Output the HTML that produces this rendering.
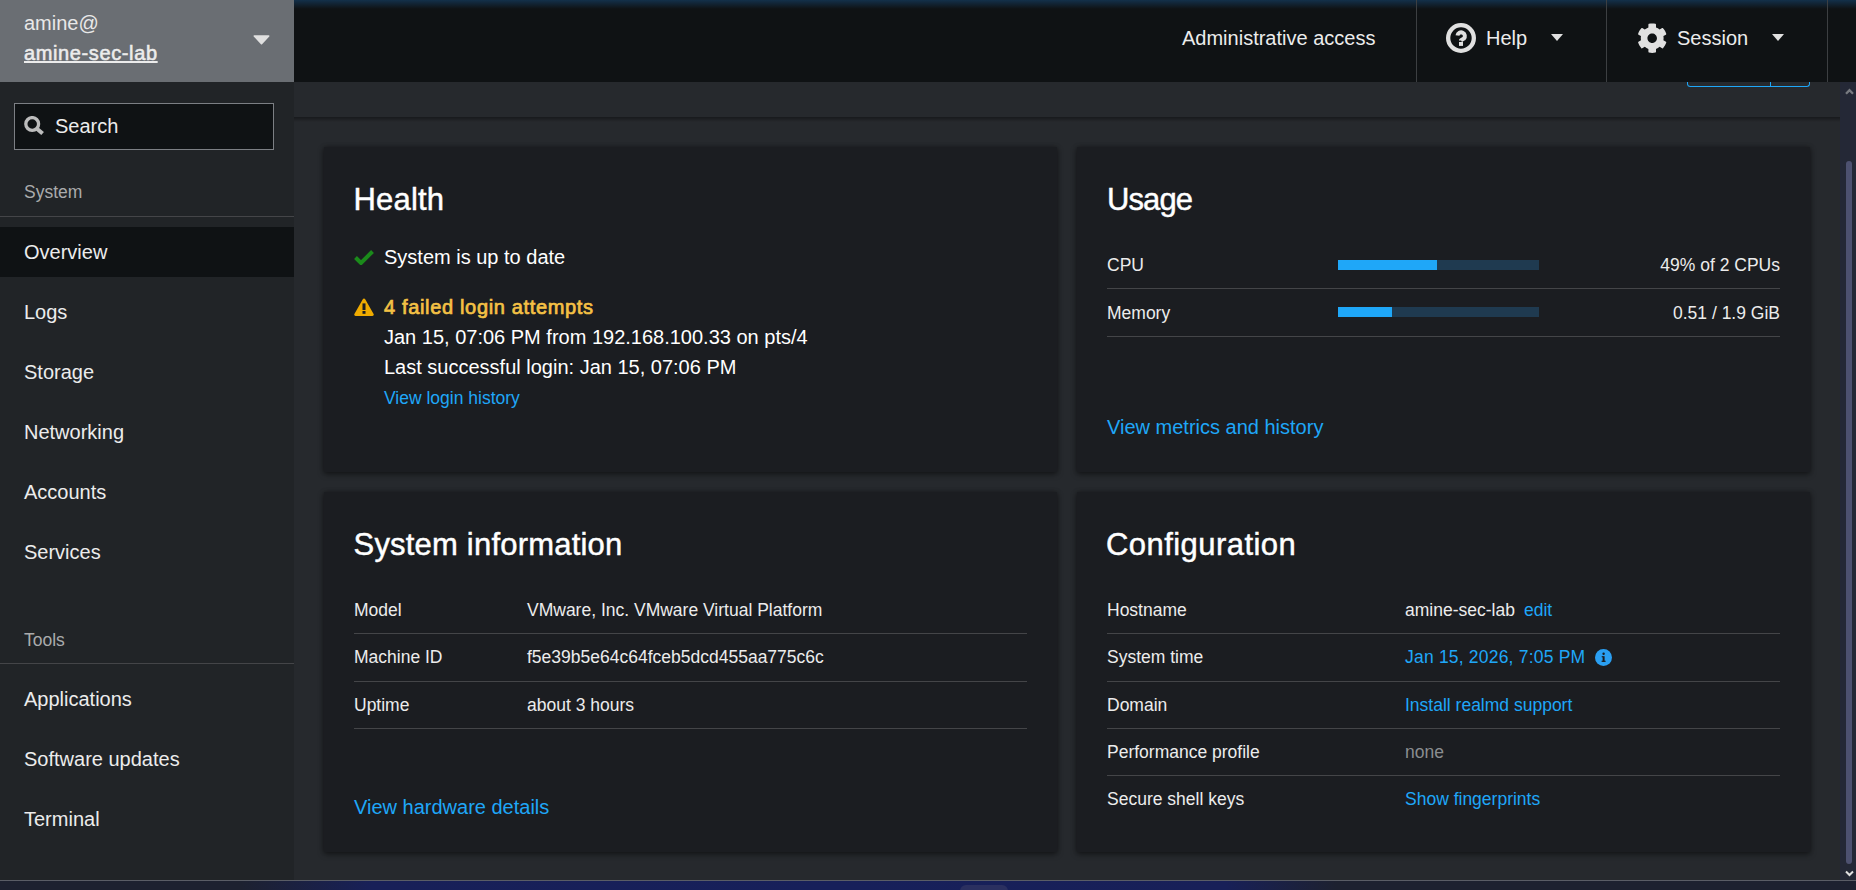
<!DOCTYPE html>
<html><head><meta charset="utf-8"><style>
html,body{margin:0;padding:0;width:1856px;height:890px;overflow:hidden;background:#26292d;font-family:"Liberation Sans", sans-serif;}
.b{position:absolute;}
.t{position:absolute;white-space:nowrap;}
</style></head><body>
<div class="b" style="left:294px;top:82px;width:1546px;height:798px;background:#26292d;"></div>
<div class="b" style="left:0px;top:82px;width:294px;height:798px;background:#212427;"></div>
<div class="b" style="left:0px;top:0px;width:294px;height:82px;background:#6a6e73;"></div>
<div class="b" style="left:294px;top:0px;width:1562px;height:82px;background:#0f1214;"></div>
<div class="b" style="left:294px;top:0px;width:1562px;height:9px;background:linear-gradient(#13304a, rgba(15,18,20,0));"></div>
<div class="b" style="left:294px;top:82px;width:1546px;height:35px;background:#26292d;z-index:1;"></div>
<div class="b" style="left:294px;top:117px;width:1546px;height:5px;background:linear-gradient(rgba(0,0,0,.38),rgba(0,0,0,0));z-index:1;"></div>
<div class="b" style="left:1687px;top:70px;width:123px;height:17px;border:1.5px solid #1fa7f8;border-top:none;border-radius:0 0 3.5px 3.5px;box-sizing:border-box;z-index:2"></div>
<div class="b" style="left:1770px;top:70px;width:1px;height:17px;background:#1fa7f8;z-index:2;"></div>
<div class="b" style="left:294px;top:0px;width:1546px;height:82px;background:#0f1214;z-index:3;"></div>
<div class="b" style="left:294px;top:0px;width:1546px;height:9px;background:linear-gradient(#13304a, rgba(15,18,20,0));z-index:3;"></div>
<div class="t" style="top:12px;font-size:20px;line-height:22px;color:#e8e8e8;left:24px;">amine@</div>
<div class="t" style="top:42px;font-size:20px;line-height:22px;color:#ececec;left:24px;letter-spacing:0.62px;-webkit-text-stroke:0.55px #ececec;text-decoration:underline;text-underline-offset:1px;text-decoration-thickness:2px;">amine-sec-lab</div>
<svg class="b" style="left:252.5px;top:34.5px" width="17" height="10" viewBox="0 0 17 10"><path d="M1.3 1H15.7L8.5 8.6Z" fill="#e0e0e0" stroke="#e0e0e0" stroke-width="1.6" stroke-linejoin="round"/></svg>
<div class="b" style="left:14px;top:103px;width:260px;height:47px;background:#0f1214;border:1px solid #7c7f84;box-sizing:border-box;"></div>
<svg class="b" style="left:24px;top:116px" width="20" height="20" viewBox="0 0 20 20"><circle cx="8.2" cy="8" r="6.4" fill="none" stroke="#bdbdbd" stroke-width="3.3"/><path d="M12.6 12.4L18.6 17.6" stroke="#bdbdbd" stroke-width="4"/></svg>
<div class="t" style="top:115px;font-size:20px;line-height:22px;color:#ececec;left:55px;">Search</div>
<div class="t" style="top:182px;font-size:17.5px;line-height:20px;color:#aaabac;left:24px;">System</div>
<div class="b" style="left:0px;top:216px;width:294px;height:1px;background:#444548;"></div>
<div class="b" style="left:0px;top:227px;width:294px;height:50px;background:#0f1214;"></div>
<div class="t" style="top:241px;font-size:20px;line-height:22px;color:#ececec;left:24px;">Overview</div>
<div class="t" style="top:301px;font-size:20px;line-height:22px;color:#ececec;left:24px;">Logs</div>
<div class="t" style="top:361px;font-size:20px;line-height:22px;color:#ececec;left:24px;">Storage</div>
<div class="t" style="top:421px;font-size:20px;line-height:22px;color:#ececec;left:24px;">Networking</div>
<div class="t" style="top:481px;font-size:20px;line-height:22px;color:#ececec;left:24px;">Accounts</div>
<div class="t" style="top:541px;font-size:20px;line-height:22px;color:#ececec;left:24px;">Services</div>
<div class="t" style="top:630px;font-size:17.5px;line-height:20px;color:#aaabac;left:24px;">Tools</div>
<div class="b" style="left:0px;top:663px;width:294px;height:1px;background:#444548;"></div>
<div class="t" style="top:688px;font-size:20px;line-height:22px;color:#ececec;left:24px;">Applications</div>
<div class="t" style="top:748px;font-size:20px;line-height:22px;color:#ececec;left:24px;">Software updates</div>
<div class="t" style="top:808px;font-size:20px;line-height:22px;color:#ececec;left:24px;">Terminal</div>
<div class="t" style="top:27px;font-size:20px;line-height:22px;color:#ececec;left:1182px;z-index:4;">Administrative access</div>
<div class="b" style="left:1416px;top:0px;width:1px;height:82px;background:#3c3f42;z-index:4;"></div>
<div class="b" style="left:1606px;top:0px;width:1px;height:82px;background:#3c3f42;z-index:4;"></div>
<div class="b" style="left:1827px;top:0px;width:1px;height:82px;background:#3c3f42;z-index:4;"></div>
<svg class="b" style="left:1446px;top:23px;z-index:4" width="30" height="30" viewBox="0 0 30 30"><circle cx="15" cy="15" r="12.85" fill="none" stroke="#e0e0e0" stroke-width="4.3"/><path d="M11.5 12.6A3.7 3.7 0 1 1 17.9 15.6L15 17.2V17.6" fill="none" stroke="#e0e0e0" stroke-width="4" stroke-linejoin="round"/><rect x="13" y="19" width="4" height="3.9" fill="#e0e0e0"/></svg>
<div class="t" style="top:27px;font-size:20px;line-height:22px;color:#ececec;left:1486px;z-index:4;">Help</div>
<svg class="b" style="left:1551px;top:34px;z-index:4" width="12" height="7" viewBox="0 0 12 7"><path d="M0 0H12L6 7Z" fill="#e0e0e0"/></svg>
<svg class="b" style="left:1636.8px;top:22.8px;z-index:4" width="30.4" height="30.4" viewBox="0 0 512 512"><path fill="#e0e0e0" d="M487.4 315.7l-42.6-24.6c4.3-23.2 4.3-47 0-70.2l42.6-24.6c4.9-2.8 7.1-8.6 5.5-14-11.1-35.6-30-67.8-54.7-94.6-3.8-4.1-10-5.1-14.8-2.3L380.8 110c-17.9-15.4-38.5-27.3-60.8-35.1V25.8c0-5.6-3.9-10.5-9.4-11.7-36.7-8.2-74.3-7.8-109.2 0-5.5 1.2-9.4 6.1-9.4 11.7V75c-22.2 7.9-42.8 19.8-60.8 35.1L88.7 85.5c-4.9-2.8-11-1.9-14.8 2.3-24.7 26.7-43.6 58.9-54.7 94.6-1.7 5.4.6 11.2 5.5 14L67.3 221c-4.3 23.2-4.3 47 0 70.2l-42.6 24.6c-4.9 2.8-7.1 8.6-5.5 14 11.1 35.6 30 67.8 54.7 94.6 3.8 4.1 10 5.1 14.8 2.3l42.6-24.6c17.9 15.4 38.5 27.3 60.8 35.1v49.2c0 5.6 3.9 10.5 9.4 11.7 36.7 8.2 74.3 7.8 109.2 0 5.5-1.2 9.4-6.1 9.4-11.7v-49.2c22.2-7.9 42.8-19.8 60.8-35.1l42.6 24.6c4.9 2.8 11 1.9 14.8-2.3 24.7-26.7 43.6-58.9 54.7-94.6 1.5-5.5-.7-11.3-5.6-14.1zM256 336c-44.1 0-80-35.9-80-80s35.9-80 80-80 80 35.9 80 80-35.9 80-80 80z"/></svg>
<div class="t" style="top:27px;font-size:20px;line-height:22px;color:#ececec;left:1677px;z-index:4;">Session</div>
<svg class="b" style="left:1772px;top:34px;z-index:4" width="12" height="7" viewBox="0 0 12 7"><path d="M0 0H12L6 7Z" fill="#e0e0e0"/></svg>
<div class="b" style="left:324px;top:147px;width:733px;height:325px;background:#1b1d21;box-shadow:0 2px 6px rgba(0,0,0,.45),0 0 4px rgba(0,0,0,.25);"></div>
<div class="b" style="left:1077px;top:147px;width:733px;height:325px;background:#1b1d21;box-shadow:0 2px 6px rgba(0,0,0,.45),0 0 4px rgba(0,0,0,.25);"></div>
<div class="b" style="left:324px;top:492px;width:733px;height:360px;background:#1b1d21;box-shadow:0 2px 6px rgba(0,0,0,.45),0 0 4px rgba(0,0,0,.25);"></div>
<div class="b" style="left:1077px;top:492px;width:733px;height:360px;background:#1b1d21;box-shadow:0 2px 6px rgba(0,0,0,.45),0 0 4px rgba(0,0,0,.25);"></div>
<div class="t" style="top:182px;font-size:31px;line-height:35px;color:#ffffff;left:353.5px;letter-spacing:0.2px;-webkit-text-stroke:0.45px #ffffff;">Health</div>
<svg class="b" style="left:354px;top:249px" width="20" height="16" viewBox="0 0 20 16"><path d="M1.5 8.5L7 14L18.5 2.5" fill="none" stroke="#1b8a1b" stroke-width="4"/></svg>
<div class="t" style="top:246px;font-size:20px;line-height:22px;color:#ffffff;left:384px;">System is up to date</div>
<svg class="b" style="left:354px;top:298px" width="20" height="18" viewBox="0 0 20 18"><path d="M10 .5c.5 0 .9.3 1.2.7l8.4 14.7c.5.9-.1 2-1.2 2H1.6c-1 0-1.7-1.1-1.2-2L8.8 1.2c.3-.4.7-.7 1.2-.7z" fill="#f0ab00"/><rect x="8.5" y="5.4" width="3" height="6.6" fill="#1b1d21"/><rect x="8.5" y="13" width="3" height="2.8" fill="#1b1d21"/></svg>
<div class="t" style="top:296px;font-size:20px;line-height:22px;color:#f4c145;left:384px;letter-spacing:0.66px;-webkit-text-stroke:0.7px #f4c145;">4 failed login attempts</div>
<div class="t" style="top:326px;font-size:20px;line-height:22px;color:#ffffff;left:384px;">Jan 15, 07:06 PM from 192.168.100.33 on pts/4</div>
<div class="t" style="top:356px;font-size:20px;line-height:22px;color:#ffffff;left:384px;">Last successful login: Jan 15, 07:06 PM</div>
<div class="t" style="top:388px;font-size:17.5px;line-height:20px;color:#1fa7f8;left:384px;">View login history</div>
<div class="t" style="top:182px;font-size:31px;line-height:35px;color:#ffffff;left:1107px;letter-spacing:-0.9px;-webkit-text-stroke:0.45px #ffffff;">Usage</div>
<div class="t" style="top:255px;font-size:17.5px;line-height:20px;color:#ececec;left:1107px;">CPU</div>
<div class="t" style="top:255px;font-size:17.5px;line-height:20px;color:#ececec;right:76px;">49% of 2 CPUs</div>
<div class="b" style="left:1338px;top:260px;width:201px;height:10px;background:#1f3a50;"></div>
<div class="b" style="left:1338px;top:260px;width:99px;height:10px;background:#1fa7f8;"></div>
<div class="b" style="left:1107px;top:288px;width:673px;height:1px;background:#444548;"></div>
<div class="t" style="top:303px;font-size:17.5px;line-height:20px;color:#ececec;left:1107px;">Memory</div>
<div class="t" style="top:303px;font-size:17.5px;line-height:20px;color:#ececec;right:76px;">0.51 / 1.9 GiB</div>
<div class="b" style="left:1338px;top:307px;width:201px;height:10px;background:#1f3a50;"></div>
<div class="b" style="left:1338px;top:307px;width:54px;height:10px;background:#1fa7f8;"></div>
<div class="b" style="left:1107px;top:336px;width:673px;height:1px;background:#444548;"></div>
<div class="t" style="top:416px;font-size:20px;line-height:22px;color:#1fa7f8;left:1107px;">View metrics and history</div>
<div class="t" style="top:527px;font-size:31px;line-height:35px;color:#ffffff;left:353.5px;letter-spacing:0.2px;-webkit-text-stroke:0.45px #ffffff;">System information</div>
<div class="t" style="top:600px;font-size:17.5px;line-height:20px;color:#ececec;left:354px;">Model</div>
<div class="t" style="top:600px;font-size:17.5px;line-height:20px;color:#ececec;left:527px;">VMware, Inc. VMware Virtual Platform</div>
<div class="b" style="left:354px;top:633px;width:673px;height:1px;background:#444548;"></div>
<div class="t" style="top:647px;font-size:17.5px;line-height:20px;color:#ececec;left:354px;">Machine ID</div>
<div class="t" style="top:647px;font-size:17.5px;line-height:20px;color:#ececec;left:527px;">f5e39b5e64c64fceb5dcd455aa775c6c</div>
<div class="b" style="left:354px;top:681px;width:673px;height:1px;background:#444548;"></div>
<div class="t" style="top:695px;font-size:17.5px;line-height:20px;color:#ececec;left:354px;">Uptime</div>
<div class="t" style="top:695px;font-size:17.5px;line-height:20px;color:#ececec;left:527px;">about 3 hours</div>
<div class="b" style="left:354px;top:728px;width:673px;height:1px;background:#444548;"></div>
<div class="t" style="top:796px;font-size:20px;line-height:22px;color:#1fa7f8;left:354px;">View hardware details</div>
<div class="t" style="top:527px;font-size:31px;line-height:35px;color:#ffffff;left:1106px;letter-spacing:0.45px;-webkit-text-stroke:0.45px #ffffff;">Configuration</div>
<div class="t" style="top:600px;font-size:17.5px;line-height:20px;color:#ececec;left:1107px;">Hostname</div>
<div class="b" style="left:1107px;top:633px;width:673px;height:1px;background:#444548;"></div>
<div class="t" style="top:647px;font-size:17.5px;line-height:20px;color:#ececec;left:1107px;">System time</div>
<div class="b" style="left:1107px;top:681px;width:673px;height:1px;background:#444548;"></div>
<div class="t" style="top:695px;font-size:17.5px;line-height:20px;color:#ececec;left:1107px;">Domain</div>
<div class="b" style="left:1107px;top:728px;width:673px;height:1px;background:#444548;"></div>
<div class="t" style="top:742px;font-size:17.5px;line-height:20px;color:#ececec;left:1107px;">Performance profile</div>
<div class="b" style="left:1107px;top:775px;width:673px;height:1px;background:#444548;"></div>
<div class="t" style="top:789px;font-size:17.5px;line-height:20px;color:#ececec;left:1107px;">Secure shell keys</div>
<div class="t" style="top:600px;font-size:17.5px;line-height:20px;color:#ececec;left:1405px;">amine-sec-lab</div>
<div class="t" style="top:600px;font-size:17.5px;line-height:20px;color:#1fa7f8;left:1524px;">edit</div>
<div class="t" style="top:647px;font-size:17.5px;line-height:20px;color:#1fa7f8;left:1405px;letter-spacing:0.2px;">Jan 15, 2026, 7:05 PM</div>
<svg class="b" style="left:1595px;top:649px" width="17" height="17" viewBox="0 0 17 17"><circle cx="8.5" cy="8.5" r="8.5" fill="#2a9ff2"/><rect x="7.6" y="7.2" width="2" height="5.6" fill="#1b1d21"/><rect x="6.7" y="7.2" width="1.6" height="1.1" fill="#1b1d21"/><rect x="6.6" y="11.7" width="4" height="1.2" fill="#1b1d21"/><circle cx="8.6" cy="4.7" r="1.2" fill="#1b1d21"/></svg>
<div class="t" style="top:695px;font-size:17.5px;line-height:20px;color:#1fa7f8;left:1405px;">Install realmd support</div>
<div class="t" style="top:742px;font-size:17.5px;line-height:20px;color:#8a8d90;left:1405px;">none</div>
<div class="t" style="top:789px;font-size:17.5px;line-height:20px;color:#1fa7f8;left:1405px;">Show fingerprints</div>
<div class="b" style="left:1840px;top:82px;width:16px;height:798px;background:#242836;"></div>
<div class="b" style="left:1846px;top:161px;width:6px;height:703px;background:#4d5170;border-radius:3px;"></div>
<svg class="b" style="left:1845px;top:88px" width="9" height="7" viewBox="0 0 9 7"><path d="M1 5.8L4.5 2.2L8 5.8" fill="none" stroke="#777a80" stroke-width="2.3"/></svg>
<svg class="b" style="left:1845px;top:870px" width="9" height="7" viewBox="0 0 9 7"><path d="M1 1.5L4.5 5L8 1.5" fill="none" stroke="#e0e0e0" stroke-width="2"/></svg>
<div class="b" style="left:0px;top:880px;width:1856px;height:1px;background:#5a5d66;"></div>
<div class="b" style="left:0px;top:881px;width:1856px;height:9px;background:linear-gradient(90deg,#1d2130 0%,#1d2130 13%,#182058 20%,#17205a 45%,#182058 66%,#1d2130 72%,#1d2130 100%);"></div>
<div class="b" style="left:960px;top:885px;width:48px;height:10px;background:#2b3060;border-radius:6px 6px 0 0;"></div>
</body></html>
